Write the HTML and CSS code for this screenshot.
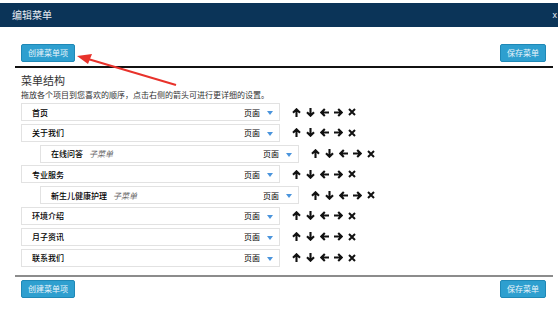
FILE: index.html
```html
<!DOCTYPE html>
<html>
<head>
    <meta charset="utf-8">
    <title>编辑菜单</title>
    <link rel="stylesheet" href="styles.css">
</head>
<body>
    <div class="modal">
        <div class="modal-head">
            <span class="title">编辑菜单</span>
            <span class="close">x</span>
        </div>

        <div class="bar bar-top">
            <button class="btn">创建菜单项</button>
            <button class="btn">保存菜单</button>
        </div>

        <div class="content">
            <h3>菜单结构</h3>
            <p class="desc">拖放各个项目到您喜欢的顺序，点击右侧的箭头可进行更详细的设置。</p>

            <ul class="menu-list">
                <li class="row">
                    <div class="item"><span class="name">首页</span><span class="type">页面</span><span class="caret"></span></div>
                    <div class="ops"><i class="op up"></i><i class="op down"></i><i class="op left"></i><i class="op right"></i><i class="op del"></i></div>
                </li>
                <li class="row">
                    <div class="item"><span class="name">关于我们</span><span class="type">页面</span><span class="caret"></span></div>
                    <div class="ops"><i class="op up"></i><i class="op down"></i><i class="op left"></i><i class="op right"></i><i class="op del"></i></div>
                </li>
                <li class="row sub">
                    <div class="item"><span class="name">在线问答</span><em class="tag">子菜单</em><span class="type">页面</span><span class="caret"></span></div>
                    <div class="ops"><i class="op up"></i><i class="op down"></i><i class="op left"></i><i class="op right"></i><i class="op del"></i></div>
                </li>
                <li class="row">
                    <div class="item"><span class="name">专业服务</span><span class="type">页面</span><span class="caret"></span></div>
                    <div class="ops"><i class="op up"></i><i class="op down"></i><i class="op left"></i><i class="op right"></i><i class="op del"></i></div>
                </li>
                <li class="row sub">
                    <div class="item"><span class="name">新生儿健康护理</span><em class="tag">子菜单</em><span class="type">页面</span><span class="caret"></span></div>
                    <div class="ops"><i class="op up"></i><i class="op down"></i><i class="op left"></i><i class="op right"></i><i class="op del"></i></div>
                </li>
                <li class="row">
                    <div class="item"><span class="name">环境介绍</span><span class="type">页面</span><span class="caret"></span></div>
                    <div class="ops"><i class="op up"></i><i class="op down"></i><i class="op left"></i><i class="op right"></i><i class="op del"></i></div>
                </li>
                <li class="row">
                    <div class="item"><span class="name">月子资讯</span><span class="type">页面</span><span class="caret"></span></div>
                    <div class="ops"><i class="op up"></i><i class="op down"></i><i class="op left"></i><i class="op right"></i><i class="op del"></i></div>
                </li>
                <li class="row">
                    <div class="item"><span class="name">联系我们</span><span class="type">页面</span><span class="caret"></span></div>
                    <div class="ops"><i class="op up"></i><i class="op down"></i><i class="op left"></i><i class="op right"></i><i class="op del"></i></div>
                </li>
            </ul>
        </div>

        <div class="bar bar-bottom">
            <button class="btn">创建菜单项</button>
            <button class="btn">保存菜单</button>
        </div>

        <!-- 标注箭头 -->
        <svg class="pointer" width="558" height="309" viewBox="0 0 558 309">
            <line x1="176" y1="85" x2="88" y2="59" stroke="#e8322b" stroke-width="2"/>
            <polygon points="77,56 92,54 88,64" fill="#e8322b"/>
        </svg>
    </div>

    <script>
    // 操作图标
    var icons = {
      up: '<svg width="9" height="9" viewBox="0 0 9 9"><path d="M1 4.8 L4.5 1.3 L8 4.8 M4.5 2 V9" fill="none" stroke="#111" stroke-width="2.1"/></svg>',
      down: '<svg width="9" height="9" viewBox="0 0 9 9"><path d="M1 4.2 L4.5 7.7 L8 4.2 M4.5 7 V0" fill="none" stroke="#111" stroke-width="2.1"/></svg>',
      left: '<svg width="9" height="9" viewBox="0 0 9 9"><path d="M4.8 1 L1.3 4.5 L4.8 8 M2 4.5 H9" fill="none" stroke="#111" stroke-width="2.1"/></svg>',
      right: '<svg width="9" height="9" viewBox="0 0 9 9"><path d="M4.2 1 L7.7 4.5 L4.2 8 M7 4.5 H0" fill="none" stroke="#111" stroke-width="2.1"/></svg>',
      del: '<svg width="8" height="8" viewBox="0 0 8 8"><path d="M1 1 L7 7 M7 1 L1 7" fill="none" stroke="#111" stroke-width="2"/></svg>'
    };
    var ops = document.querySelectorAll('.op');
    for (var i = 0; i < ops.length; i++) {
      ops[i].innerHTML = icons[ops[i].className.split(' ')[1]];
    }
    </script>
</body>
</html>
```

FILE: styles.css
```css
body {
  margin: 0;
  background-color: #fff;
  font-family: "Noto Sans CJK SC", "Noto Sans", sans-serif;
  color: #222;
}

.modal {
  position: relative;
  width: 558px;
  height: 309px;
  overflow: hidden;
}

.modal-head {
  display: flex;
  justify-content: space-between;
  align-items: center;
  margin-top: 3px;
  height: 24px;
  padding: 0 0 0 12px;
  background-color: #0b3458;
  color: #e9eef3;
}

.modal-head .title {
  font-size: 10px;
  line-height: 24px;
}

.modal-head .close {
  font-family: "Liberation Sans", sans-serif;
  font-size: 9px;
  margin-right: 1px;
}

.bar {
  display: flex;
  justify-content: space-between;
  align-items: center;
  margin-left: 15px;
  width: 538px;
}

.bar-top {
  padding: 17px 0 4px 0;
  border-bottom: 2px solid #111;
}

.bar-bottom {
  padding: 3px 0 0 0;
  border-top: 2px solid #8c8c8c;
}

.btn {
  height: 18px;
  padding: 0 6px;
  margin: 0 7px 0 6px;
  border: 1px solid #1f88b6;
  border-radius: 2px;
  background-color: #2e9fcf;
  color: #e8f4fa;
  font-family: "Noto Sans CJK SC", sans-serif;
  font-size: 8px;
  line-height: 16px;
}

.content {
  padding: 4px 0 0 21px;
  height: 203px;
}

.content h3 {
  margin: 0;
  font-size: 11px;
  font-weight: normal;
  line-height: 16px;
  color: #333;
}

.desc {
  margin: 1px 0 2px 0;
  font-size: 8px;
  line-height: 12px;
  color: #333;
}

.menu-list {
  margin: 0;
  padding: 0;
  list-style: none;
}

.row {
  display: flex;
  align-items: center;
  height: 18px;
  margin-bottom: 2.8px;
}

.row.sub {
  padding-left: 19px;
}

.item {
  display: flex;
  align-items: center;
  box-sizing: border-box;
  width: 259px;
  height: 18px;
  padding: 0 6px 0 10px;
  border: 1px solid #e2e2e2;
  font-size: 8px;
  color: #000;
}

.item .name {
  font-weight: 500;
}

.item .tag {
  margin-left: 6px;
  font-size: 8px;
  color: #666;
}

.item .type {
  margin-left: auto;
  margin-right: 7px;
  font-size: 8px;
}

.caret {
  width: 0;
  height: 0;
  border-left: 3px solid transparent;
  border-right: 3px solid transparent;
  border-top: 4px solid #4a94dc;
  margin-top: 2px;
}

.ops {
  display: flex;
  align-items: center;
  margin-left: 12px;
}

.op {
  display: flex;
  width: 10px;
  margin-right: 4px;
}

.op svg {
  display: block;
}

.pointer {
  position: absolute;
  left: 0;
  top: 0;
  pointer-events: none;
}
```
